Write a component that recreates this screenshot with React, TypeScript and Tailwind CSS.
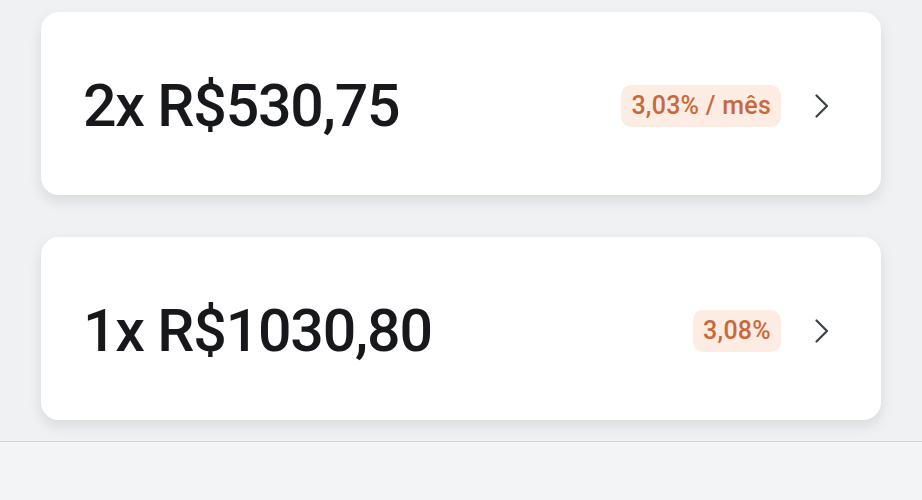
const options = [
  { label: "2x R$530,75", rate: "3,03% / mês" },
  { label: "1x R$1030,80", rate: "3,08%" },
];

function Chevron() {
  return (
    <svg width="16" height="26" viewBox="0 0 16 26" fill="none" className="text-[#3b404a]">
      <path d="M2.5 2.5 13 13 2.5 23.5" stroke="currentColor" strokeWidth="2.2" strokeLinecap="round" strokeLinejoin="round" />
    </svg>
  );
}

function OptionCard({ label, rate }: { label: string; rate: string }) {
  return (
    <div className="flex h-[183px] items-center justify-between rounded-[18px] bg-white pl-[42px] pr-[51px] shadow-[0_6px_14px_rgba(15,23,42,0.10)]">
      <div className="mt-[6px] text-[59px] font-medium tracking-[-0.02em] text-[#16181c]">{label}</div>
      <div className="mt-[4px] flex items-center gap-[33px]">
        <span className="rounded-[10px] bg-[#fdece3] px-[10px] py-[6px] text-[25px] font-medium leading-[30px] tracking-[0.01em] text-[#c9683a]">
          {rate}
        </span>
        <Chevron />
      </div>
    </div>
  );
}

export default function App() {
  return (
    <div className="h-[500px] bg-[#f3f4f6] font-['Roboto',sans-serif]">
      <div className="flex flex-col gap-[42px] bg-[#eff1f3] px-[41px] pb-[21px] pt-[12px]">
        {options.map((o) => (
          <OptionCard key={o.label} label={o.label} rate={o.rate} />
        ))}
      </div>
      <div className="h-px bg-[#d1d5db]" />
    </div>
  );
}
